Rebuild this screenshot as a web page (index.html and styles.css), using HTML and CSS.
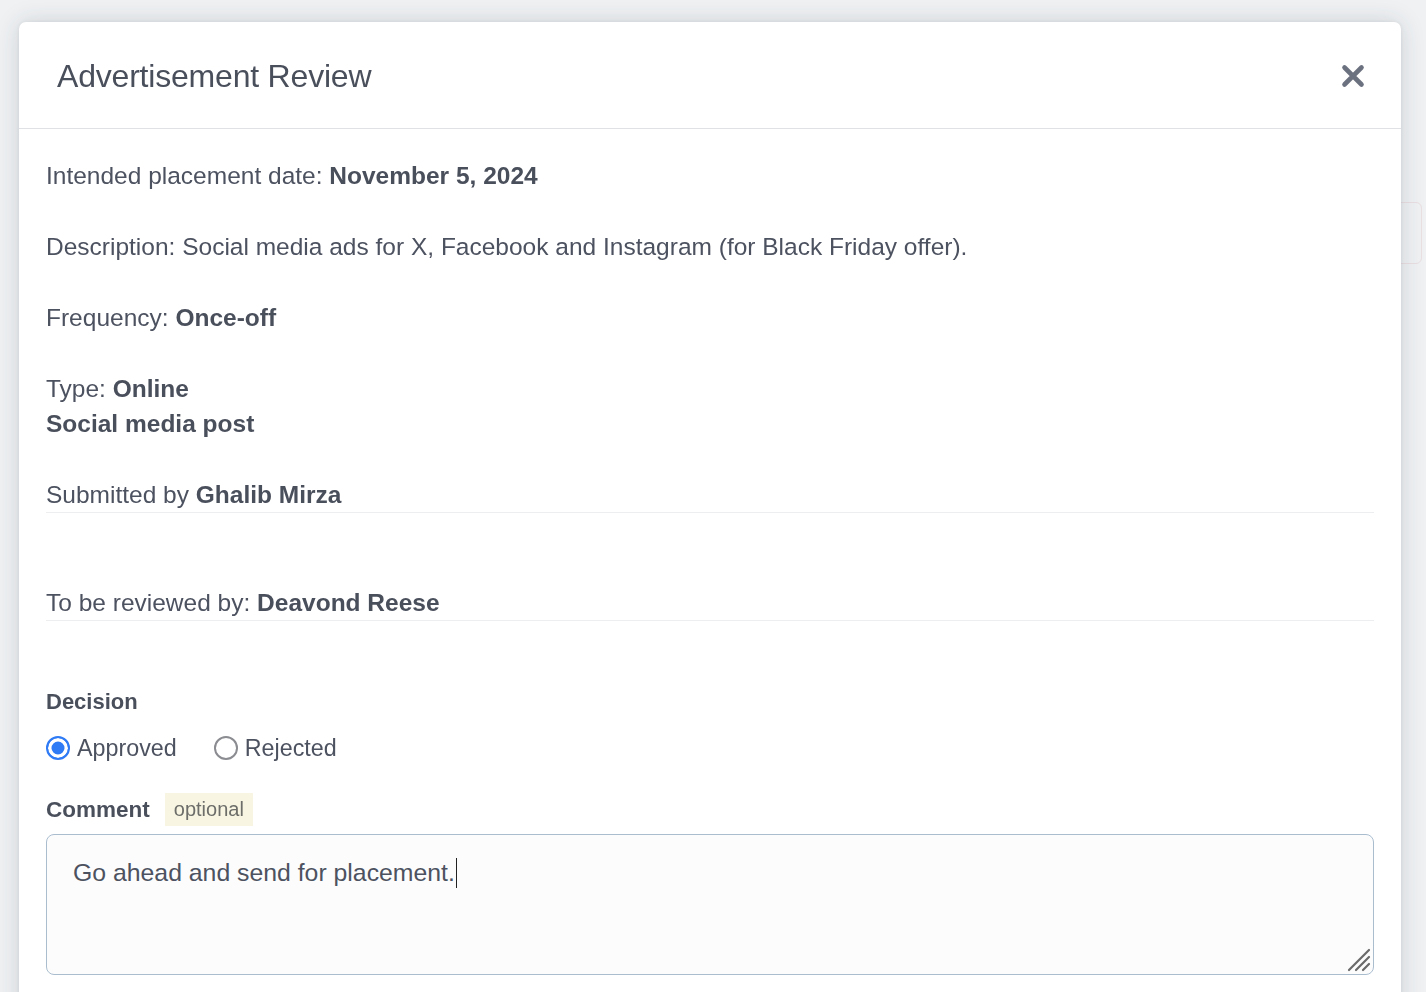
FILE: index.html
```html
<!DOCTYPE html>
<html lang="en">
<head>
<meta charset="utf-8">
<title>Advertisement Review</title>
<link rel="stylesheet" href="styles.css">
</head>
<body>
<div class="backdrop-page">
  <div class="bg-row"><span class="bg-box"></span></div>
</div>
<div class="modal">
  <div class="modal-header">
    <h1 class="modal-title">Advertisement Review</h1>
    <button class="close-btn" aria-label="Close">
      <svg width="24" height="24" viewBox="0 0 24 24"><path d="M3.5 3.5 L20.5 20.5 M20.5 3.5 L3.5 20.5" stroke="#6c7180" stroke-width="4.6" stroke-linecap="round" fill="none"/></svg>
    </button>
  </div>
  <div class="modal-body">
    <p class="field">Intended placement date: <strong>November 5, 2024</strong></p>
    <p class="field">Description: Social media ads for X, Facebook and Instagram (for Black Friday offer).</p>
    <p class="field">Frequency: <strong>Once-off</strong></p>
    <p class="field">Type: <strong>Online</strong><br><strong>Social media post</strong></p>
    <p class="field ruled">Submitted by <strong>Ghalib Mirza</strong></p>
    <p class="field ruled last">To be reviewed by: <strong>Deavond Reese</strong></p>

    <div class="label">Decision</div>
    <div class="radios">
      <label class="radio"><span class="radio-dot checked"></span>Approved</label>
      <label class="radio"><span class="radio-dot"></span>Rejected</label>
    </div>

    <div class="comment-label"><span class="label">Comment</span><span class="badge">optional</span></div>
    <div class="textarea">
      <span class="ta-text">Go ahead and send for placement.</span><span class="caret"></span>
      <svg class="grip" width="26" height="26" viewBox="0 0 26 26"><path d="M24 4 L4 24 M24 11 L11 24 M24 18 L18 24" stroke="#6a6a6a" stroke-width="2.2" stroke-linecap="round" fill="none"/></svg>
    </div>
  </div>
</div>
</body>
</html>
```

FILE: styles.css
```css
* { box-sizing: border-box; }
html, body { margin: 0; padding: 0; }
body {
  width: 1426px;
  height: 992px;
  overflow: hidden;
  background: #eff1f3;
  font-family: "Liberation Sans", Arial, Helvetica, sans-serif;
  color: #4b505e;
}

/* dimmed page behind the modal */
.backdrop-page {
  padding: 200px 0 0 0;
  display: flex;
  flex-direction: column;
}
.bg-row {
  display: flex;
  justify-content: flex-end;
  height: 66px;
}
.bg-box {
  width: 60px;
  height: 62px;
  border: 1.5px solid #eadfe2;
  border-radius: 6px;
  margin-right: 4px;
  margin-top: 2px;
}

.modal {
  position: fixed;
  top: 22px;
  left: 19px;
  width: 1382px;
  height: 1000px;
  background: #fff;
  border-radius: 7px;
  box-shadow: 0 0 24px rgba(40, 48, 60, 0.16), 0 0 4px rgba(40, 48, 60, 0.08);
}

.modal-header {
  height: 107px;
  display: flex;
  align-items: center;
  justify-content: space-between;
  padding: 0 36px 0 38px;
  border-bottom: 1px solid #dfe1e5;
}
.modal-title {
  margin: 0;
  font-size: 32px;
  font-weight: normal;
  color: #4a4f5c;
  letter-spacing: -0.2px;
  padding-top: 2px;
}
.close-btn {
  border: 0;
  background: none;
  padding: 0;
  width: 24px;
  height: 24px;
  display: flex;
  margin-top: 2px;
}

.modal-body {
  padding: 29px 27px 0 27px;
}
.field {
  margin: 0 0 36px 0;
  font-size: 24.5px;
  line-height: 35px;
  color: #4d5260;
}
.field strong {
  font-weight: bold;
  color: #4a4f5c;
}
.field.ruled {
  border-bottom: 1px solid #eceef0;
  margin-bottom: 72px;
  padding-bottom: 0;
}
.field.ruled.last { margin-bottom: 66px; }

.label {
  font-size: 22px;
  font-weight: bold;
  color: #4a4f5c;
  line-height: 30px;
}
.comment-label .label { font-size: 22.5px; }
.radios {
  display: flex;
  gap: 37px;
  margin-top: 16px;
  height: 30px;
  align-items: center;
}
.radio {
  display: flex;
  align-items: center;
  gap: 7px;
  font-size: 23.3px;
  color: #4d5260;
}
.radio-dot {
  width: 24px;
  height: 24px;
  border-radius: 50%;
  border: 2px solid #8b8c91;
  background: #fff;
}
.radio-dot.checked {
  border: 2.5px solid #2f7bf5;
  background: #2f7bf5;
  box-shadow: inset 0 0 0 3.5px #fff;
}

.comment-label {
  display: flex;
  align-items: center;
  gap: 15px;
  margin-top: 30px;
  height: 33px;
}
.badge {
  background: #f8f6e3;
  color: #6d6d6a;
  font-size: 20px;
  padding: 0 9px;
  height: 33px;
  line-height: 33px;
}

.textarea {
  position: relative;
  margin-top: 8px;
  height: 141px;
  border: 1.5px solid #a9bdcf;
  border-radius: 8px;
  background: #fcfcfd;
  padding: 20px 0 0 26px;
  font-size: 24.8px;
  line-height: 35px;
  color: #4d5260;
}
.caret {
  display: inline-block;
  width: 1.5px;
  height: 30px;
  background: #222;
  vertical-align: -7px;
  margin-left: 1px;
}
.grip {
  position: absolute;
  right: 2px;
  bottom: 2px;
}
```
